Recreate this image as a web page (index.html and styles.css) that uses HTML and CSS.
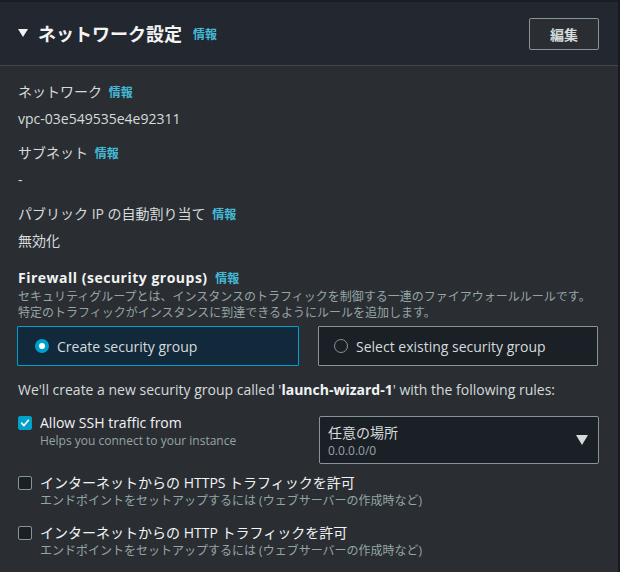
FILE: index.html
```html
<!DOCTYPE html>
<html lang="ja">
<head>
<meta charset="utf-8">
<link rel="stylesheet" href="styles.css">
</head>
<body>
<div class="panel">
  <div class="header">
    <div class="title-wrap">
      <span class="caret"></span>
      <h2 class="title">ネットワーク設定</h2>
      <a class="info">情報</a>
    </div>
    <button class="btn">編集</button>
  </div>
  <div class="content">
    <div class="field">
      <div class="label">ネットワーク <a class="info">情報</a></div>
      <div class="value">vpc-03e549535e4e92311</div>
    </div>
    <div class="field">
      <div class="label">サブネット <a class="info">情報</a></div>
      <div class="value">-</div>
    </div>
    <div class="field">
      <div class="label">パブリック IP の自動割り当て <a class="info">情報</a></div>
      <div class="value">無効化</div>
    </div>

    <div class="fw">
      <div class="fw-title"><span class="fw-text">Firewall (security groups)</span> <a class="info">情報</a></div>
      <div class="fw-desc">セキュリティグループとは、インスタンスのトラフィックを制御する一連のファイアウォールルールです。<br>特定のトラフィックがインスタンスに到達できるようにルールを追加します。</div>
    </div>

    <div class="tiles">
      <div class="tile selected"><span class="radio on"></span>Create security group</div>
      <div class="tile"><span class="radio"></span>Select existing security group</div>
    </div>

    <p class="note">We'll create a new security group called '<b>launch-wizard-1</b>' with the following rules:</p>

    <div class="rule-row">
      <div class="check-item first">
        <span class="cb on"><svg viewBox="0 0 14 14" width="14" height="14"><path d="M3 7.2 L5.8 10 L11 3.8" fill="none" stroke="#fff" stroke-width="2" stroke-linecap="round" stroke-linejoin="round"/></svg></span>
        <div>
          <div class="cb-label">Allow SSH traffic from</div>
          <div class="cb-desc">Helps you connect to your instance</div>
        </div>
      </div>
      <div class="select">
        <div>
          <div class="sel-main">任意の場所</div>
          <div class="sel-sub">0.0.0.0/0</div>
        </div>
        <span class="sel-caret"></span>
      </div>
    </div>

    <div class="check-item">
      <span class="cb"></span>
      <div>
        <div class="cb-label">インターネットからの HTTPS トラフィックを許可</div>
        <div class="cb-desc">エンドポイントをセットアップするには (ウェブサーバーの作成時など)</div>
      </div>
    </div>
    <div class="check-item">
      <span class="cb"></span>
      <div>
        <div class="cb-label">インターネットからの HTTP トラフィックを許可</div>
        <div class="cb-desc">エンドポイントをセットアップするには (ウェブサーバーの作成時など)</div>
      </div>
    </div>
  </div>
</div>
</body>
</html>
```

FILE: styles.css
```css
* { box-sizing: border-box; }
html, body {
  margin: 0;
  padding: 0;
  background: #16191f;
}
body {
  font-family: "Open Sans", "Noto Sans CJK JP", sans-serif;
  color: #d5dbdb;
  font-size: 14px;
  width: 620px;
  height: 572px;
  overflow: hidden;
}
.panel {
  width: 618px;
  height: 572px;
  background: #2a2e33;
  border-top: 2px solid #1a1d22;
}
.header {
  height: 64px;
  background: #232730;
  border-bottom: 1px solid #414750;
  display: flex;
  align-items: center;
  justify-content: space-between;
  padding: 0 19px 0 18px;
}
.title-wrap {
  display: flex;
  align-items: center;
}
.caret {
  width: 0;
  height: 0;
  border-left: 5px solid transparent;
  border-right: 5px solid transparent;
  border-top: 8px solid #f2f3f3;
  margin: 0 10px 2px 0;
}
.title {
  margin: 0 11px 0 0;
  font-size: 18px;
  font-weight: 700;
  color: #f2f3f3;
  line-height: 24px;
}
.info {
  color: #44b9d6;
  font-size: 12px;
  font-weight: 700;
}
.btn {
  width: 70px;
  height: 32px;
  background: #2a2e33;
  border: 1px solid #879596;
  border-radius: 2px;
  color: #d5dbdb;
  font-family: inherit;
  font-size: 14px;
  font-weight: 700;
  padding: 0;
}
.content {
  padding: 15px 18px 0 18px;
  width: 618px;
}
.field { margin-bottom: 12px; }
.label, .value { line-height: 22px; }
.label .info { margin-left: 3px; }
.value { margin-top: 4px; }
.fw { margin-top: 15px; }
.fw-title {
  font-weight: 700;
  line-height: 22px;
  color: #f2f3f3;
}
.fw-text { letter-spacing: 0.5px; }
.fw-title .info { margin-left: 4px; }
.fw-desc {
  font-size: 12px;
  line-height: 16px;
  color: #95a5a6;
  margin-top: -1px;
  white-space: nowrap;
}
.tiles {
  display: grid;
  grid-template-columns: 282px 280px;
  justify-content: space-between;
  margin-top: 5px;
  width: 581px;
  margin-left: -1px;
}
.tile {
  height: 40px;
  border: 1px solid #879596;
  background: #1b1f26;
  display: flex;
  align-items: center;
  padding-left: 15px;
  border-radius: 1px;
}
.tile.selected {
  background: #12293b;
  border-color: #00a1c9;
  padding-left: 17px;
}
.radio {
  width: 14px;
  height: 14px;
  border-radius: 50%;
  border: 1.5px solid #879596;
  margin-right: 8px;
  flex: none;
}
.radio.on {
  border: 4px solid #00a1c9;
  background: #fff;
}
.note {
  margin: 13px 0 0 0;
  line-height: 22px;
}
.note b { font-weight: 700; color: #f2f3f3; }
.rule-row {
  display: flex;
  justify-content: space-between;
  margin-top: 15px;
  margin-bottom: 9px;
  width: 581px;
}
.check-item {
  display: flex;
  align-items: flex-start;
  margin-bottom: 14px;
}
.check-item.first {
  margin-top: -3px;
  margin-bottom: 0;
}
.cb {
  width: 14px;
  height: 14px;
  border: 1px solid #879596;
  border-radius: 2px;
  background: #1b1f26;
  margin: 3px 8px 0 0;
  flex: none;
  display: flex;
  align-items: center;
  justify-content: center;
}
.cb.on {
  background: #00a1c9;
  border-color: #00a1c9;
}
.cb.on svg { width: 12px; height: 12px; }
.cb-label { line-height: 20px; color: #f2f3f3; }
.cb-desc {
  font-size: 12px;
  line-height: 16px;
  color: #95a5a6;
}
.select {
  width: 280px;
  height: 48px;
  border: 1px solid #879596;
  background: #1b1f26;
  border-radius: 2px;
  display: flex;
  align-items: center;
  justify-content: space-between;
  padding: 0 10px 0 8px;
}
.sel-main { line-height: 21px; color: #d5dbdb; }
.sel-sub { font-size: 12px; line-height: 16px; color: #95a5a6; }
.sel-caret {
  width: 0;
  height: 0;
  border-left: 6px solid transparent;
  border-right: 6px solid transparent;
  border-top: 10px solid #d5dbdb;
}
```
